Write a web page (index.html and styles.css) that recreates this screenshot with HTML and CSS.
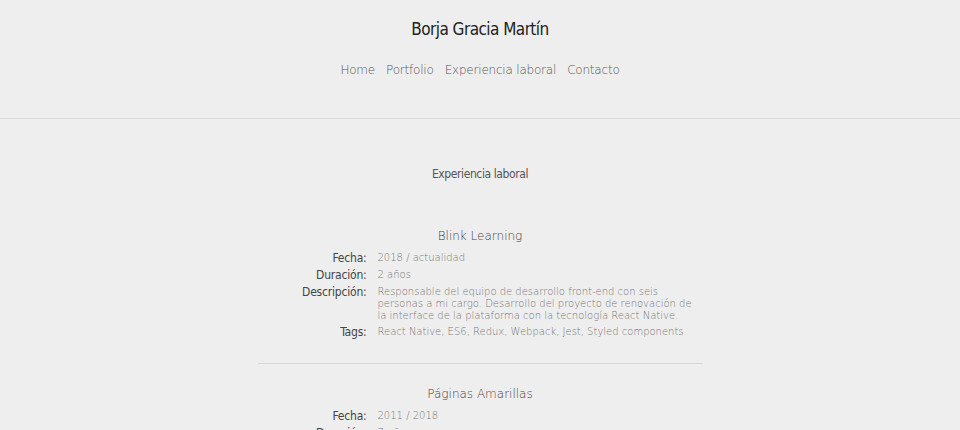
FILE: index.html
```html
<!DOCTYPE html>
<html lang="es">
<head>
<meta charset="utf-8">
<title>Borja Gracia Martín</title>
<link rel="stylesheet" href="styles.css">
</head>
<body>
<header class="header">
  <h1 class="name">Borja Gracia Martín</h1>
  <nav class="nav">
    <a href="#">Home</a>
    <a href="#">Portfolio</a>
    <a href="#">Experiencia laboral</a>
    <a href="#">Contacto</a>
  </nav>
</header>
<main class="main">
  <h2 class="section-title">Experiencia laboral</h2>
  <section class="job">
    <h3 class="company">Blink Learning</h3>
    <dl class="details">
      <dt>Fecha:</dt><dd>2018 / actualidad</dd>
      <dt>Duración:</dt><dd>2 años</dd>
      <dt>Descripción:</dt><dd>Responsable del equipo de desarrollo front-end con seis personas a mi cargo. Desarrollo del proyecto de renovación de la interface de la plataforma con la tecnología React Native.</dd>
      <dt>Tags:</dt><dd>React Native, ES6, Redux, Webpack, Jest, Styled components</dd>
    </dl>
  </section>
  <section class="job">
    <h3 class="company">Páginas Amarillas</h3>
    <dl class="details">
      <dt>Fecha:</dt><dd>2011 / 2018</dd>
      <dt>Duración:</dt><dd>7 años</dd>
    </dl>
  </section>
</main>
</body>
</html>
```
FILE: styles.css
```css
html, body {
  margin: 0;
  padding: 0;
  background: #eeeeee;
}
body {
  font-family: "DejaVu Sans", sans-serif;
  color: #666;
}
.header {
  border-bottom: 1px solid #dcdcdc;
  padding-top: 18px;
  height: 100px;
  text-align: center;
}
.name {
  margin: 0;
  font-family: "DejaVu Sans Condensed", sans-serif;
  font-weight: normal;
  font-size: 17px;
  letter-spacing: -0.55px;
  line-height: 22px;
  color: #222;
}
.nav {
  margin-top: 23px;
  display: flex;
  justify-content: center;
  gap: 11px;
  font-size: 12px;
  letter-spacing: -0.2px;
  font-weight: 300;
}
.nav a {
  color: #555;
  text-decoration: none;
}
.main {
  width: 445px;
  margin: 0 auto;
  padding-top: 47px;
}
.section-title {
  margin: 0 0 46px;
  text-align: center;
  font-family: "DejaVu Sans Condensed", sans-serif;
  font-weight: normal;
  font-size: 12px;
  letter-spacing: -0.4px;
  line-height: 16px;
  color: #555;
}
.job {
  padding-bottom: 24px;
  margin-bottom: 22px;
  border-bottom: 1px solid #d8d8d8;
}
.company {
  margin: 0 0 8px;
  text-align: center;
  font-weight: 300;
  font-size: 12px;
  line-height: 16px;
  color: #444;
}
.details {
  display: grid;
  grid-template-columns: 109px 1fr;
  column-gap: 11px;
  row-gap: 4px;
  margin: 0;
}
.details dt {
  text-align: right;
  font-family: "DejaVu Sans Condensed", sans-serif;
  font-size: 12px;
  letter-spacing: -0.2px;
  line-height: 13px;
  color: #444;
}
.details dd {
  margin: 0;
  font-size: 10px;
  line-height: 12px;
  font-weight: 300;
  color: #777;
  padding-right: 6px;
}
```
